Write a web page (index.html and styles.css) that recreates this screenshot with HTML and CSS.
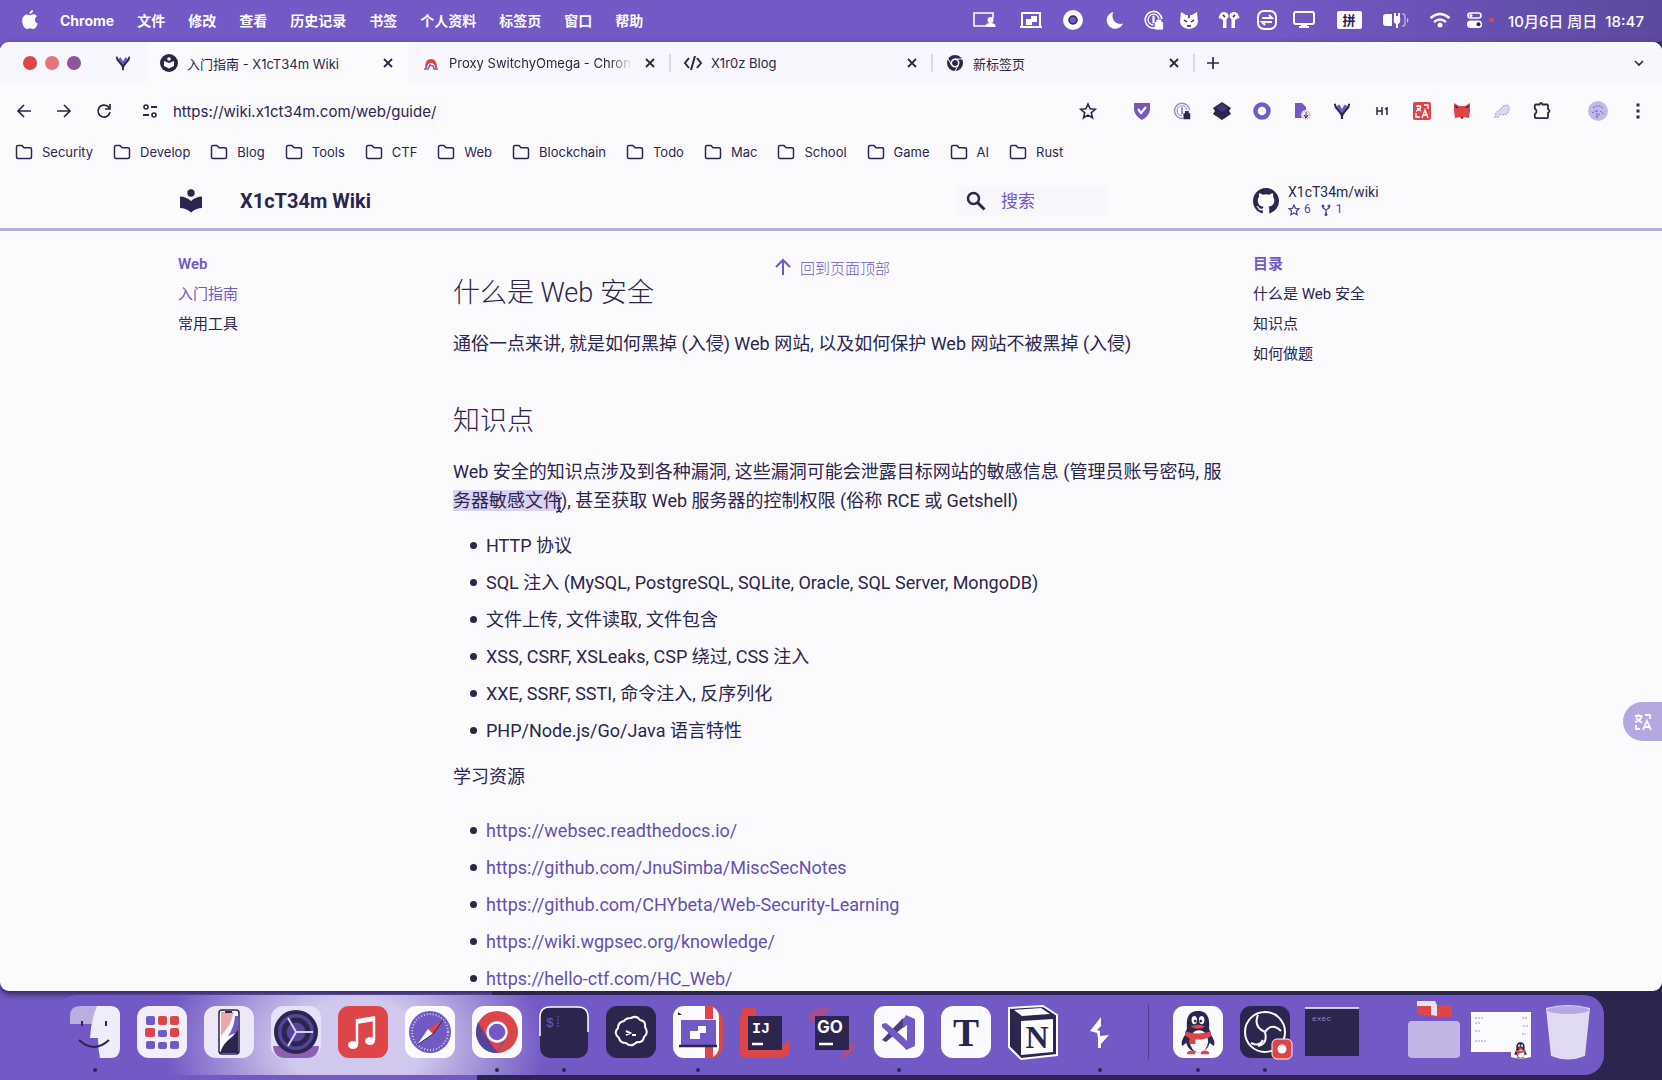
FILE: index.html
```html
<!DOCTYPE html>
<html lang="zh-CN">
<head>
<meta charset="utf-8">
<title>入门指南 - X1cT34m Wiki</title>
<link rel="stylesheet" href="styles.css">
</head>
<body>
<svg class="defs" aria-hidden="true">
  <symbol id="folder" viewBox="0 0 18 16"><path d="M3 1.500h4l2 2.300h6q1.500 0 1.500 1.500V13q0 1.500-1.500 1.500H3Q1.500 14.500 1.500 13V3q0-1.500 1.500-1.500z" fill="none" stroke="currentColor" stroke-width="1.500"/></symbol>
  <symbol id="close" viewBox="0 0 12 12"><path d="M2 2l8 8M10 2l-8 8" stroke="currentColor" stroke-width="1.800"/></symbol>
  <symbol id="vim" viewBox="0 0 20 20"><path d="M5 4l5 9 5-9" fill="none" stroke="#7359c5" stroke-width="5"/><path d="M2 2l1 4 7 8 7-8 1-4M10 12v7" fill="none" stroke="#2c254d" stroke-width="2.200"/></symbol>
  <symbol id="onep" viewBox="0 0 24 24"><path d="M14 21.500A10 10 0 1 1 22 11" fill="none" stroke="currentColor" stroke-width="2"/><path d="M12 18a6.500 6.500 0 1 1 6.500-7" fill="none" stroke="currentColor" stroke-width="1.600"/><path d="M12 7v9" stroke="currentColor" stroke-width="2.600"/></symbol>
  <symbol id="penguin" viewBox="0 0 40 50"><path d="M8 24q-8 11-5 15l5-4zM32 24q8 11 5 15l-5-4z" fill="#2c254d"/><path d="M20 1C10 1 7 8 8 20c-4 8-2 26 12 26s16-18 12-26C33 8 30 1 20 1z" fill="#2c254d"/><ellipse cx="21" cy="34" rx="10" ry="12" fill="#fbfbfe"/><ellipse cx="16" cy="11" rx="3" ry="4.500" fill="#fbfbfe"/><ellipse cx="24" cy="11" rx="3" ry="4.500" fill="#fbfbfe"/><circle cx="17" cy="12" r="1.500" fill="#2c254d"/><circle cx="23" cy="12" r="1.500" fill="#2c254d"/><path d="M12 18q8-4 16 0-8 5-16 0zM6 23q14 5 28 0v6q-10 4-17 3v5h-6v-6l-5-3zM8 46q5-4 9 0v2H8zM23 46q5-4 9 0v2h-9z" fill="#dd4548"/></symbol>
</svg>

<header class="menubar">
  <svg class="apple" viewBox="0 0 16 20"><path d="M11 0c.200 2-1.600 4-3.500 4C7.300 2 9.200.200 11 0zM8 5.200c1 0 2-.900 3.600-.900 1.500 0 2.700.800 3.400 1.900-3 1.800-2.500 6 .800 7.300C14.800 16.500 13 19 11.500 19c-1.300 0-1.800-.800-3.300-.800-1.600 0-2.100.800-3.300.800C2.700 19 .200 14.800.200 11c0-4.200 2.400-6.600 4.800-6.600C6.300 4.400 7.300 5.200 8 5.200z" fill="currentColor"/></svg>
  <nav class="menus">
    <b class="app-name">Chrome</b><span>文件</span><span>修改</span><span>查看</span><span>历史记录</span><span>书签</span><span>个人资料</span><span>标签页</span><span>窗口</span><span>帮助</span>
  </nav>
  <div class="status">
    <svg width="48" height="20" viewBox="0 0 24 20"><path d="M13 16H2V3h19v5" fill="none" stroke="currentColor" stroke-width="1.600"/><circle cx="18.500" cy="10" r="3" fill="currentColor"/><path d="M13 17q0-4 5.500-4t5 4z" fill="currentColor"/></svg>
    <svg width="46" height="20" viewBox="0 0 24 20"><path d="M3 16V3h18v13M1 17h22" fill="none" stroke="currentColor" stroke-width="2"/><path d="M7 9h5V6h6v6h-5v3H7z" fill="currentColor"/></svg>
    <svg width="38" height="20" viewBox="0 0 20 20"><circle cx="10" cy="10" r="10" fill="currentColor"/><circle cx="10" cy="10" r="4" fill="#7359c5" stroke="#2c254d" stroke-width="1.500"/></svg>
    <svg width="46" height="18" viewBox="0 0 20 20"><path d="M8 1A9.500 9.500 0 1 0 19 14C11 16 5 9 8 1z" fill="currentColor"/></svg>
    <svg width="31" height="20" viewBox="0 0 24 24"><use href="#onep"/><path d="M14 15h9v8h-9zM16 15v-3h5v3" fill="currentColor" stroke="currentColor"/></svg>
    <svg width="40" height="18" viewBox="0 0 20 18"><path d="M2 1l5 3h6l5-3 1 10q-1 6-9 7-8-1-9-7z" fill="currentColor"/><path d="M5 9l3 2M15 9l-3 2M8 15h4M10 4v3" stroke="#2c254d" stroke-width="1.500"/></svg>
    <svg width="40" height="18" viewBox="0 0 22 18"><ellipse cx="6" cy="5" rx="4.500" ry="4" fill="currentColor"/><ellipse cx="16" cy="5" rx="4.500" ry="4" fill="currentColor"/><path d="M5 6h3.500v11H5zM17 6h-3.500v11H17z" fill="currentColor"/><path d="M1 7l2-2M21 7l-2-2" stroke="currentColor" stroke-width="2"/><path d="M5 4l2 2M17 4l-2 2" stroke="#2c254d" stroke-width="1.500"/></svg>
    <svg width="36" height="20" viewBox="0 0 20 20"><rect x="1" y="1" width="18" height="18" rx="6" fill="none" stroke="currentColor" stroke-width="2"/><path d="M5 8h10l-3-3M15 12H5l3 3" fill="none" stroke="currentColor" stroke-width="2"/></svg>
    <svg width="38" height="18" viewBox="0 0 22 18"><rect x="1" y="1" width="20" height="12" rx="2" fill="none" stroke="currentColor" stroke-width="2"/><path d="M8 13h6v2h2v2H6v-2h2z" fill="currentColor"/></svg>
    <span class="ime-slot"><span class="ime">拼</span></span>
    <svg width="42" height="16" viewBox="0 0 28 16"><path d="M4 2h6v12H4q-3 0-3-3V5q0-3 3-3zM12 1h2v3h2V1h2v4q1 6-2 7v4h-2v-4q-3-1-2-7z" fill="currentColor"/><path d="M20 2h1q2 0 2 3v6q0 3-2 3h-1" fill="none" stroke="#b5a8e1" stroke-width="1.500"/><path d="M25 6q3 2 0 5z" fill="#d1c9ed"/></svg>
    <svg width="46" height="16" viewBox="0 0 22 16"><path d="M1.500 6Q11-2 20.500 6M5 10q6-5 12 0" fill="none" stroke="currentColor" stroke-width="2.400"/><circle cx="11" cy="13" r="2.500" fill="currentColor"/></svg>
    <svg width="24" height="16" viewBox="0 0 16 16"><rect x="1" y="1" width="13" height="5" rx="2.500" fill="none" stroke="currentColor" stroke-width="1.600"/><rect y="8.500" width="15" height="7.500" rx="3.500" fill="currentColor"/><circle cx="11.500" cy="12.200" r="2" fill="#2c254d"/><circle cx="4" cy="3.500" r="1.500" fill="currentColor"/></svg>
    <i class="rec-dot"></i>
    <time>10月6日 周日&nbsp; 18:47</time>
  </div>
</header>

<main class="window">
  <div class="tabstrip">
    <div class="lights"><i></i><i></i><i></i></div>
    <svg class="pinned" viewBox="0 0 20 20"><use href="#vim"/></svg>
    <div class="tab active">
      <svg class="favicon" viewBox="0 0 18 18"><circle cx="9" cy="9" r="9" fill="#2c254d"/><circle cx="9" cy="5" r="1.800" fill="#fbfbfe"/><path d="M4 7l5 2 5-2v5l-5 2.500L4 12z" fill="#fbfbfe"/></svg>
      <span class="tab-title">入门指南 - X1cT34m Wiki</span>
      <button class="tab-close" aria-label="关闭"><svg viewBox="0 0 12 12"><use href="#close"/></svg></button>
    </div>
    <div class="tab">
      <svg class="favicon" viewBox="0 0 18 18"><path d="M3 14Q3 5 9 5t6 9z" fill="#dd4548"/><path d="M5 15q0-6 4-6t4 6z" fill="#fbfbfe"/><path d="M2 15h4l2-4 3 1 1 3h4" fill="none" stroke="#7359c5" stroke-width="1.500"/></svg>
      <span class="tab-title fade">Proxy SwitchyOmega - Chron</span>
      <button class="tab-close" aria-label="关闭"><svg viewBox="0 0 12 12"><use href="#close"/></svg></button>
    </div>
    <div class="tab">
      <svg class="favicon" viewBox="0 0 18 18"><path d="M5 4L1 9l4 5M13 4l4 5-4 5M11 2L7 16" fill="none" stroke="#2c254d" stroke-width="2"/></svg>
      <span class="tab-title">X1r0z Blog</span>
      <button class="tab-close" aria-label="关闭"><svg viewBox="0 0 12 12"><use href="#close"/></svg></button>
    </div>
    <div class="tab">
      <svg class="favicon" viewBox="0 0 18 18"><circle cx="9" cy="9" r="8" fill="#2c254d"/><circle cx="9" cy="9" r="3.700" fill="#2c254d" stroke="#fbfbfe" stroke-width="1.500"/><path d="M9 5h8M5.500 11L2 4.500M12.500 11L9 17" stroke="#fbfbfe"/></svg>
      <span class="tab-title">新标签页</span>
      <button class="tab-close" aria-label="关闭"><svg viewBox="0 0 12 12"><use href="#close"/></svg></button>
    </div>
    <button class="new-tab" aria-label="新标签页"><svg viewBox="0 0 12 12"><path d="M6 0v12M0 6h12" stroke="currentColor" stroke-width="1.700"/></svg></button>
    <button class="tab-list" aria-label="搜索标签页"><svg viewBox="0 0 12 12"><path d="M2 4l4 4 4-4" fill="none" stroke="currentColor" stroke-width="1.700"/></svg></button>
  </div>

  <div class="toolbar">
    <button aria-label="后退"><svg viewBox="0 0 18 18"><path d="M16 9H3M9 3L3 9l6 6" fill="none" stroke="currentColor" stroke-width="1.700"/></svg></button>
    <button aria-label="前进"><svg viewBox="0 0 18 18"><path d="M2 9h13M9 3l6 6-6 6" fill="none" stroke="currentColor" stroke-width="1.700"/></svg></button>
    <button aria-label="重新加载"><svg viewBox="0 0 18 18"><path d="M15 10a6 6 0 1 1-2-5.500L15 7M15 2v5h-5" fill="none" stroke="currentColor" stroke-width="1.700"/></svg></button>
    <button class="site-info" aria-label="网站信息"><svg viewBox="0 0 18 18"><circle cx="5" cy="5" r="2" fill="none" stroke="currentColor" stroke-width="1.600"/><circle cx="13" cy="13" r="2" fill="none" stroke="currentColor" stroke-width="1.600"/><path d="M10 5h6M2 13h6" stroke="currentColor" stroke-width="1.800"/></svg></button>
    <input class="url" type="text" aria-label="地址" value="https://wiki.x1ct34m.com/web/guide/">
    <button class="star" aria-label="收藏"><svg viewBox="0 0 18 18"><path d="M9 2l2.100 4.800 5.200.500-4 3.400 1.200 5.100L9 13.100l-4.500 2.700 1.200-5.100-4-3.400 5.200-.500z" fill="none" stroke="currentColor" stroke-width="1.600"/></svg></button>
    <div class="extensions">
      <svg viewBox="0 0 18 18"><path d="M1 1h16v7q-1 6-8 10Q2 14 1 8z" fill="#7359c5"/><path d="M2 2h14M3 11q2 3 5 5M15 11l-4 4" stroke="#dd4548" stroke-dasharray="1.500 1.500" fill="none"/><path d="M5 7l3 4 5-6" fill="none" stroke="#fbfbfe" stroke-width="2.200"/></svg>
      <svg viewBox="0 0 24 24" class="violet"><use href="#onep"/><path d="M14 15h9v8h-9zM16 15v-3h5v3" fill="#2c254d"/></svg>
      <svg viewBox="0 0 18 18"><path d="M9 0l9 6-2 3 2 3-9 6-9-6 2-3-2-3z" fill="#2c254d"/><path d="M9 2l6 4-6 4-6-4z" fill="#463779"/></svg>
      <svg viewBox="0 0 18 18"><circle cx="9" cy="9" r="6.500" fill="none" stroke="#7359c5" stroke-width="4.500"/></svg>
      <svg viewBox="0 0 18 18"><path d="M2 1h7l4 4v11H2z" fill="#7359c5"/><circle cx="13" cy="13" r="5" fill="#fbfbfe"/><circle cx="13" cy="13" r="4" fill="none" stroke="#dd4548" stroke-dasharray="1 1"/><path d="M13 10v5M11 13l2 3 2-3" fill="none" stroke="#2c254d"/></svg>
      <svg viewBox="0 0 20 20"><use href="#vim"/></svg>
      <svg viewBox="0 0 18 18"><path d="M4 5v8M9 5v8M4 9h5M12 7l2-1v7" fill="none" stroke="#2c254d" stroke-width="1.500"/></svg>
      <svg viewBox="0 0 18 18"><rect width="18" height="18" rx="2" fill="#dd4548"/><path d="M3 4h5M5.500 3v2M8 4q-1 4-5 5M4 6l4 3M11 3h4v4M3 11v4h4M9 16l3-8 3 8M10 13h5" fill="none" stroke="#fbfbfe" stroke-width="1.400"/></svg>
      <svg viewBox="0 0 18 18"><path d="M1 1l5 3h6l5-3v8l-1 7-5-1-2 2-2-2-5 1-1-7z" fill="#dd4548"/><path d="M2 4l3 2M16 4l-3 2" stroke="#2c254d" stroke-width="1.500"/><path d="M7.500 15h3l-1.500 2z" fill="#2c254d"/></svg>
      <svg viewBox="0 0 18 18"><path d="M2 16q0-7 5-8 2-5 8-5 3 4-1 9l-4 1-3-1-2 4" fill="#dcd6f1" stroke="#a092d8" stroke-dasharray="2 1"/></svg>
      <svg viewBox="0 0 18 18"><path d="M3 2.500h3.500q1.500-3 3 0H14q1 0 1 1V7q3 1.500 0 4v4q0 1.200-1 1.200H3q-1.200 0-1.200-1.200v-3q3.500-2.500 0-5.500V3.500q0-1 1.200-1z" fill="none" stroke="#2c254d" stroke-width="1.800"/></svg>
    </div>
    <svg class="avatar" viewBox="0 0 20 20"><circle cx="10" cy="10" r="10" fill="#c3b9e7"/><path d="M5 7q5-4 10 0M4 12l4-2M12 10l4 3M9 9v8M12 13l-5 3" stroke="#7359c5" fill="none" stroke-dasharray="2 1"/></svg>
    <button class="more" aria-label="更多"><svg viewBox="0 0 18 18"><path d="M7.500 1.500h3v3h-3zM7.500 7.500h3v3h-3zM7.500 13.500h3v3h-3z" fill="currentColor"/></svg></button>
  </div>

  <nav class="bookmarks">
    <a href="#"><svg><use href="#folder"/></svg>Security</a>
    <a href="#"><svg><use href="#folder"/></svg>Develop</a>
    <a href="#"><svg><use href="#folder"/></svg>Blog</a>
    <a href="#"><svg><use href="#folder"/></svg>Tools</a>
    <a href="#"><svg><use href="#folder"/></svg>CTF</a>
    <a href="#"><svg><use href="#folder"/></svg>Web</a>
    <a href="#"><svg><use href="#folder"/></svg>Blockchain</a>
    <a href="#"><svg><use href="#folder"/></svg>Todo</a>
    <a href="#"><svg><use href="#folder"/></svg>Mac</a>
    <a href="#"><svg><use href="#folder"/></svg>School</a>
    <a href="#"><svg><use href="#folder"/></svg>Game</a>
    <a href="#"><svg><use href="#folder"/></svg>AI</a>
    <a href="#"><svg><use href="#folder"/></svg>Rust</a>
  </nav>

  <div class="site-header">
    <div class="wrap header-row">
      <svg class="logo" viewBox="0 0 24 24"><circle cx="12" cy="4" r="3.700" fill="currentColor"/><path d="M1 7.500q6 0 11 4.500 5-4.500 11-4.500V19q-6 0-11 4.500Q7 19 1 19z" fill="currentColor"/></svg>
      <a class="site-title" href="#">X1cT34m Wiki</a>
      <label class="search">
        <svg viewBox="0 0 20 20"><circle cx="7.500" cy="7.500" r="5.500" fill="none" stroke="currentColor" stroke-width="2.500"/><path d="M11.500 11.500l7 7" stroke="currentColor" stroke-width="3"/></svg>
        <input type="text" placeholder="搜索" aria-label="搜索">
      </label>
      <a class="repo" href="#">
        <svg class="github" viewBox="0 0 16 16"><path fill="currentColor" d="M8 0C3.580 0 0 3.580 0 8c0 3.540 2.290 6.530 5.470 7.590.400.070.550-.170.550-.380 0-.190-.010-.820-.010-1.490-2.010.370-2.530-.490-2.690-.940-.090-.230-.480-.940-.820-1.130-.280-.150-.680-.520-.010-.530.630-.010 1.080.580 1.230.820.720 1.210 1.870.870 2.330.660.070-.520.280-.870.510-1.070-1.780-.200-3.640-.890-3.640-3.950 0-.870.310-1.590.820-2.150-.080-.200-.360-1.020.080-2.120 0 0 .670-.210 2.200.820a7.600 7.600 0 0 1 4 0c1.530-1.040 2.200-.820 2.200-.820.440 1.100.160 1.920.080 2.120.510.560.820 1.270.820 2.150 0 3.070-1.870 3.750-3.650 3.950.290.250.540.730.540 1.480 0 1.070-.010 1.930-.010 2.200 0 .210.150.460.550.380A8 8 0 0 0 16 8c0-4.420-3.580-8-8-8z"/></svg>
        <span class="repo-text">
          <span>X1cT34m/wiki</span>
          <span class="facts"><svg viewBox="0 0 12 12"><path d="M6 1l1.500 3.300 3.500.400-2.600 2.400.700 3.600L6 9 2.900 10.700l.700-3.600L1 4.700l3.500-.400z" fill="none" stroke="currentColor" stroke-width="1.300"/></svg>6 <svg class="fork" viewBox="0 0 12 12"><path d="M3 2v2l3 2 3-2V2M6 6v4" fill="none" stroke="currentColor" stroke-width="1.400"/><circle cx="3" cy="2" r="1.500" fill="currentColor"/><circle cx="9" cy="2" r="1.500" fill="currentColor"/><circle cx="6" cy="10.500" r="1.500" fill="currentColor"/></svg>1</span>
        </span>
      </a>
    </div>
  </div>

  <div class="page">
    <div class="wrap columns">
      <nav class="side">
        <b>Web</b>
        <a class="current" href="#">入门指南</a>
        <a href="#">常用工具</a>
      </nav>
      <article>
        <h2>什么是 Web 安全</h2>
        <p>通俗一点来讲, 就是如何黑掉 (入侵) Web 网站, 以及如何保护 Web 网站不被黑掉 (入侵)</p>
        <h2>知识点</h2>
        <p>Web 安全的知识点涉及到各种漏洞, 这些漏洞可能会泄露目标网站的敏感信息 (管理员账号密码, 服<mark>务器敏感文件<svg class="ibeam" viewBox="0 0 8 16"><path d="M1 1q3 0 3 2 0-2 3-2M4 3v10M1 15q3 0 3-2 0 2 3 2M2 11h4" fill="none" stroke="#2c254d" stroke-width="1.500"/></svg></mark>), 甚至获取 Web 服务器的控制权限 (俗称 RCE 或 Getshell)</p>
        <ul>
          <li>HTTP 协议</li>
          <li>SQL 注入 (MySQL, PostgreSQL, SQLite, Oracle, SQL Server, MongoDB)</li>
          <li>文件上传, 文件读取, 文件包含</li>
          <li>XSS, CSRF, XSLeaks, CSP 绕过, CSS 注入</li>
          <li>XXE, SSRF, SSTI, 命令注入, 反序列化</li>
          <li>PHP/Node.js/Go/Java 语言特性</li>
        </ul>
        <p>学习资源</p>
        <ul class="links">
          <li><a href="#">https://websec.readthedocs.io/</a></li>
          <li><a href="#">https://github.com/JnuSimba/MiscSecNotes</a></li>
          <li><a href="#">https://github.com/CHYbeta/Web-Security-Learning</a></li>
          <li><a href="#">https://wiki.wgpsec.org/knowledge/</a></li>
          <li><a href="#">https://hello-ctf.com/HC_Web/</a></li>
        </ul>
      </article>
      <nav class="side toc">
        <b>目录</b>
        <a href="#">什么是 Web 安全</a>
        <a href="#">知识点</a>
        <a href="#">如何做题</a>
      </nav>
    </div>
    <button class="to-top"><svg viewBox="0 0 18 18"><path d="M9 17V2M2 9l7-7 7 7" fill="none" stroke="currentColor" stroke-width="2"/></svg>回到页面顶部</button>
    <button class="translate" aria-label="翻译"><svg viewBox="0 0 20 20"><path d="M2 4h7M5.500 2v2M9 4Q7 9 2 10M3 6l6 5M12 3h5v4M3 13v4h4M10 18l4-9 4 9M11 15h6" fill="none" stroke="#fbfbfe" stroke-width="1.800"/></svg></button>
  </div>
</main>

<footer class="dock">
  <div class="app running"><svg viewBox="0 0 50 52"><rect width="50" height="52" rx="10" fill="#7359c5"/><path d="M0 18V10Q0 0 10 0h30q10 0 10 10v8z" fill="#b9ade2"/><path d="M0 18h24v34H10Q0 52 0 42z" fill="#7359c5"/><path d="M27 0h13q10 0 10 10v32q0 10-10 10H30q-2-9-2-20h-8q1-18 7-32z" fill="#f0edfa"/><path d="M12 15v5M36 15v5" stroke="#2c254d" stroke-width="2"/><path d="M9 34q15 14 30 0" fill="none" stroke="#2c254d" stroke-width="2"/></svg></div>
  <div class="app"><svg viewBox="0 0 50 52"><rect width="50" height="52" rx="12" fill="#f2effb"/><g fill="#dd4548"><rect x="21" y="10" width="9" height="9" rx="2"/><rect x="33" y="10" width="9" height="9" rx="2"/><rect x="8" y="22" width="10" height="9" rx="2"/><rect x="33" y="22" width="9" height="9" rx="2"/></g><g fill="#7359c5"><rect x="9" y="10" width="9" height="9" rx="2"/><rect x="21" y="24" width="9" height="7" rx="2"/><rect x="9" y="35" width="9" height="8" rx="2"/><rect x="21" y="36" width="9" height="7" rx="2"/><rect x="33" y="35" width="9" height="8" rx="2"/></g></svg></div>
  <div class="app"><svg viewBox="0 0 50 52"><rect width="50" height="52" rx="12" fill="#ece8f8"/><rect x="15" y="4" width="20" height="44" rx="3" fill="#fbfbfe" stroke="#2c254d" stroke-width="1.500"/><path d="M17 6h13l-4 12-9 12z" fill="#eea6aa"/><path d="M34 10v16l-10 4q6-8 7-20z" fill="#7359c5"/><path d="M34 24v23H16q3-10 12-16z" fill="#2c254d"/><path d="M21 5h7v2h-7z" fill="#2c254d"/></svg></div>
  <div class="app"><svg viewBox="0 0 50 52"><rect width="50" height="52" rx="12" fill="#e6e1f6"/><path d="M2 40h46q-1 12-12 12H14Q3 52 2 40z" fill="#8b61b4"/><circle cx="25" cy="26" r="20" fill="#56439a" stroke="#2c254d" stroke-width="4"/><circle cx="25" cy="26" r="12" fill="none" stroke="#2c254d" stroke-width="5"/><path d="M25 26h17M25 26l-8-14M25 26l-8 14" stroke="#d5ceee" stroke-width="2"/></svg></div>
  <div class="app"><svg viewBox="0 0 50 52"><rect width="50" height="52" rx="11" fill="#dd4548"/><path d="M19 13l18-3v5l-18 3z" fill="#fbfbfe"/><path d="M19 13v25M36 11v23" stroke="#fbfbfe" stroke-width="2.500"/><ellipse cx="15" cy="39" rx="5" ry="4" fill="#fbfbfe"/><ellipse cx="32" cy="35" rx="5" ry="4" fill="#fbfbfe"/></svg></div>
  <div class="app"><svg viewBox="0 0 50 52"><rect width="50" height="52" rx="11" fill="#fbfbfe"/><circle cx="25" cy="26" r="21" fill="#7359c5"/><circle cx="25" cy="26" r="18" fill="none" stroke="#d5ceee" stroke-width="2" stroke-dasharray="1 2"/><path d="M38 14L23 23l5 5z" fill="#dd4548"/><path d="M12 39l11-16 5 5z" fill="#fbfbfe"/><path d="M38 14L28 28 12 39" fill="none" stroke="#2c254d"/></svg></div>
  <div class="app running"><svg viewBox="0 0 50 52"><rect width="50" height="52" rx="12" fill="#fbfbfe"/><circle cx="25" cy="26" r="21" fill="#dd4548"/><path d="M6 16l11 19 9 12Q8 47 4 29q0-8 2-13z" fill="#55429a"/><path d="M25 47l10-18" stroke="#8d4e95" stroke-width="2"/><circle cx="25" cy="26" r="9.500" fill="#7359c5" stroke="#fbfbfe" stroke-width="2.500"/></svg></div>
  <div class="app running"><svg viewBox="0 0 50 52"><rect x="1" y="1" width="48" height="51" rx="10" fill="#2c254d"/><path d="M1 30V11Q1 1 11 1h28q10 0 10 10v15" fill="none" stroke="#fbfbfe" stroke-width="1.500"/><text x="7" y="21" font-family="Liberation Mono, monospace" font-size="13" fill="#7359c5">$</text><path d="M19 10v12" stroke="#7359c5" stroke-dasharray="2 1"/></svg></div>
  <div class="app"><svg viewBox="0 0 50 52"><rect width="50" height="52" rx="11" fill="#2c254d"/><path d="M25 12q6-3 9 2 6 1 5 7 4 6-1 10-1 6-7 5-6 6-11 1-6 0-7-5-6-5-1-10 0-6 6-7 2-3 7-3z" fill="none" stroke="#fbfbfe" stroke-width="2"/><path d="M20 25l4 2-4 2M26 29h4" fill="none" stroke="#fbfbfe" stroke-width="2"/></svg></div>
  <div class="app running"><svg viewBox="0 0 50 52"><path d="M43 4q7 3 7 11v22q0 13-10 15z" fill="#dd4548"/><rect width="46" height="52" rx="11" fill="#fbfbfe"/><path d="M32 0h8v52h-8z" fill="#dd4548"/><path d="M31 13h13v26H31z" fill="#fbfbfe"/><rect x="8" y="14" width="35" height="25" fill="#7359c5"/><path d="M17 25h8v-5h8v7h-6v6H17z" fill="#fbfbfe"/><path d="M6 40h38" stroke="#2c254d" stroke-width="2.500"/><path d="M5 6l4 3H5z" fill="#2c254d"/></svg></div>
  <div class="app"><svg viewBox="0 0 50 52"><path d="M3 2h13v9H8v33h28l14-10v8q0 10-12 10H6Q0 52 0 46V12z" fill="#dd4548"/><rect x="8" y="10" width="34" height="34" fill="#2c254d"/><text x="12" y="27" font-family="Liberation Mono, monospace" font-weight="700" font-size="15" fill="#fbfbfe">IJ</text><path d="M12 38h11" stroke="#fbfbfe" stroke-width="2.500"/></svg></div>
  <div class="app"><svg viewBox="0 0 50 52"><path d="M1 14Q4 0 23 2L8 16zM48 36q0 14-16 16l10-13z" fill="#a7508a"/><rect x="8" y="10" width="34" height="34" fill="#2c254d"/><text x="10" y="27" font-family="Inter, sans-serif" font-weight="700" font-size="17" fill="#fbfbfe">GO</text><path d="M12 38h14" stroke="#fbfbfe" stroke-width="2.500"/></svg></div>
  <div class="app running"><svg viewBox="0 0 50 52"><rect width="50" height="52" rx="11" fill="#fbfbfe"/><path d="M8 34L29 12l4 6-21 18z" fill="#4b3b84"/><path d="M8 18l4-1 21 17v10L8 21z" fill="#7359c5"/><path d="M32 9l9 4v27l-9 4-3-5V14z" fill="#7359c5"/><path d="M33 19v16l-9-9z" fill="#fbfbfe"/></svg></div>
  <div class="app"><svg viewBox="0 0 50 52"><rect width="50" height="52" rx="12" fill="#fbfbfe"/><text x="25" y="40" text-anchor="middle" font-family="Liberation Serif, serif" font-weight="700" font-size="39" fill="#2c254d">T</text></svg></div>
  <div class="app"><svg viewBox="0 0 50 52"><path d="M1 2l34-2 14 9v40l-36 4L1 41z" fill="#2c254d" stroke="#fbfbfe" stroke-width="2"/><path d="M6 4l27-2 9 6-28 2zM13 15l32-2v33l-32 3z" fill="#fbfbfe"/><text x="29" y="42" text-anchor="middle" font-family="Liberation Serif, serif" font-weight="700" font-size="32" fill="#2c254d">N</text></svg></div>
  <div class="app running"><svg viewBox="0 0 50 52"><path d="M26 11v9l-4 4 3 1v5l9-1-8 9v4h-3V32l-1-5-7-2z" fill="#fbfbfe"/></svg></div>
  <hr>
  <div class="app running"><svg viewBox="0 0 50 52"><rect width="50" height="52" rx="11" fill="#fbfbfe"/><svg x="6" y="4" width="38" height="46" viewBox="0 0 40 50"><use href="#penguin"/></svg></svg></div>
  <div class="app running"><svg viewBox="0 0 50 52"><rect width="50" height="52" rx="11" fill="#2c254d"/><circle cx="25" cy="26" r="20" fill="none" stroke="#fbfbfe" stroke-width="2"/><path d="M18 9q-5 12 7 17M25 26q7-10 16-1M25 26q3 12-7 14M11 37q8 4 12-3" fill="none" stroke="#fbfbfe" stroke-width="2"/><rect x="32" y="33" width="20" height="20" rx="5" fill="#dd4548" stroke="#fbfbfe"/><circle cx="42" cy="43" r="4.500" fill="#fbfbfe"/></svg></div>
  <div class="app"><svg viewBox="0 0 50 52"><path d="M-2 2h54v48H-2z" fill="#2c254d"/><path d="M-2 2h54" stroke="#fbfbfe" stroke-width="1.500"/><text x="5" y="15" font-family="Liberation Mono, monospace" font-size="8" fill="#9282d2">exec</text></svg></div>
  <div class="spacer"></div>
  <div class="app"><svg viewBox="0 0 50 52"><path d="M8-1h35v12H26L8 8z" fill="#dd4548"/><path d="M8-5h18l2 4v11l-6-1V0H8z" fill="#e8e3f7"/><rect x="-1" y="15" width="52" height="37" rx="4" fill="#c0b5e5"/></svg></div>
  <div class="app"><svg viewBox="0 0 50 52"><path d="M-5 6h60v40H-5z" fill="#fbfbfe"/><path d="M-1 12h8M-1 17h6M-1 25h5M-1 35h12M46 12h6M47 20h5M46 28h4" stroke="#a092d8" stroke-dasharray="2 1"/><path d="M35 37h20v14q-10 3-20 0z" fill="#fbfbfe"/><svg x="36" y="36" width="17" height="17" viewBox="0 0 40 50"><use href="#penguin"/></svg></svg></div>
  <div class="app"><svg viewBox="0 0 50 52"><path d="M3 2q22-6 44 0l-5 48q-17 7-34 0z" fill="#e0daf3"/><ellipse cx="25" cy="4" rx="21" ry="4" fill="#b6a9e0"/></svg></div>
</footer>
</body>
</html>
```
FILE: styles.css
```css
:root {
  --paper: #fbfbfe;
  --violet: #7359c5;
  --ink: #2c254d;
  --red: #dd4548;
  --ui: Inter, "Noto Sans CJK SC", sans-serif;
  --doc: Roboto, "Noto Sans CJK SC", sans-serif;
}

* { box-sizing: border-box; }

body {
  margin: 0;
  height: 100vh;
  display: flex;
  flex-direction: column;
  overflow: hidden;
  color: var(--ink);
  font-family: var(--ui);
  background: linear-gradient(100deg, var(--violet) 36%, var(--ink) 36%);
}

button, input { font: inherit; color: inherit; border: 0; padding: 0; background: none; }
button { display: flex; align-items: center; justify-content: center; }
a { color: inherit; text-decoration: none; }
svg { display: block; flex: none; overflow: visible; }
.defs { position: absolute; width: 0; height: 0; }

/* menu bar */
.menubar {
  flex: none;
  height: 42px;
  display: flex;
  align-items: center;
  padding: 0 18px 2px 22px;
  color: var(--paper);
  font-size: 14px;
  background: linear-gradient(90deg, var(--violet) 76%, #5d499f);
}
.apple { width: 16px; height: 20px; }
.menus { display: flex; align-items: baseline; gap: 23px; margin-left: 22px; white-space: nowrap; font-weight: 600; }
.app-name { font-weight: 700; }
.status { display: flex; align-items: center; margin-left: auto; }
.ime-slot { width: 52px; display: flex; justify-content: center; }
.ime { width: 25px; height: 18px; border-radius: 2px; background: var(--paper); color: var(--ink); font-size: 13px; line-height: 18px; font-weight: 700; text-align: center; }
.rec-dot { width: 5px; height: 4px; margin-left: 2px; background: var(--red); }
.status time { width: 136px; margin-left: 14px; font-size: 15px; font-weight: 500; white-space: nowrap; text-align: right; }

/* browser window */
.window {
  flex: 1;
  min-height: 0;
  display: flex;
  flex-direction: column;
  overflow: hidden;
  border-radius: 9px;
  background: var(--paper);
  box-shadow: 0 3px 6px var(--ink);
}
.tabstrip { flex: none; height: 42px; display: flex; align-items: center; padding: 0 13px 0 23px; font-size: 13px; background: #f8f7fd; }
.lights { display: flex; gap: 8px; }
.lights i { width: 14px; height: 14px; border-radius: 50%; background: var(--red); }
.lights i:nth-child(2) { background: #e57478; }
.lights i:nth-child(3) { background: #8c559c; }
.pinned { width: 16px; height: 16px; margin: 0 16px 0 34px; }
.tab { width: 262px; height: 100%; display: flex; align-items: center; padding-left: 13px; }
.tab::after { content: ""; width: 2px; height: 18px; margin-left: 13px; background: #dcd6f1; }
.tab.active { background: var(--paper); }
.tab.active::after { background: none; }
.favicon { width: 18px; height: 18px; }
.tab-title { flex: 1; margin: 0 8px 0 9px; overflow: hidden; white-space: nowrap; }
.fade { mask-image: linear-gradient(90deg, #000 86%, transparent 98%); }
.tab-close svg { width: 12px; height: 12px; }
.new-tab { margin-left: 12px; }
.new-tab svg, .tab-list svg { width: 12px; height: 12px; }
.tab-list { margin-left: auto; padding: 0 4px; }

.toolbar { flex: none; height: 54px; display: flex; align-items: center; padding: 0 15px; }
.toolbar button svg { width: 18px; height: 18px; }
.toolbar > button { width: 18px; margin-right: 22px; }
.toolbar .site-info { margin: 0 14px 0 6px; }
.url { flex: 1; min-width: 0; font-size: 15px; }
.toolbar .star { margin-right: 36px; }
.extensions { display: flex; gap: 22px; }
.extensions svg { width: 18px; height: 18px; }
.violet { color: #9d8dd7; }
.avatar { width: 20px; height: 20px; margin: 0 21px 0 37px; }
.toolbar .more { margin: 0; }

.bookmarks { flex: none; height: 28px; display: flex; align-items: center; gap: 20px; padding: 0 15px; font-size: 13px; }
.bookmarks a { display: flex; align-items: center; gap: 9px; }
.bookmarks svg { width: 18px; height: 16px; }

/* wiki */
.wrap { max-width: 1306px; margin: 0 auto; }
.site-header { flex: none; border-bottom: 3px solid #b8abe2; font-family: var(--doc); }
.header-row { height: 62px; display: flex; align-items: center; padding-top: 8px; }
.logo { width: 24px; height: 24px; margin: 0 37px 0 1px; }
.site-title { font-size: 20px; font-weight: 700; }
.search { width: 153px; height: 30px; margin-left: auto; display: flex; align-items: center; gap: 15px; padding: 0 11px; background: #f8f7fd; }
.search svg { width: 20px; height: 20px; }
.search input { width: 90px; font-size: 17px; }
.search input::placeholder { color: var(--violet); opacity: 1; }
.repo { width: 231px; margin-left: 145px; display: flex; align-items: center; gap: 9px; font-size: 14px; line-height: 17px; }
.github { width: 26px; height: 26px; }
.repo-text { display: flex; flex-direction: column; }
.facts { display: flex; gap: 4px; font-size: 12px; color: #54439a; }
.facts svg { width: 12px; height: 12px; align-self: center; }
.fork { margin-left: 5px; }

.page { position: relative; flex: 1; min-height: 0; overflow: hidden; font-family: var(--doc); }
.columns { display: grid; grid-template-columns: 275px 1fr 231px; }
.side { display: flex; flex-direction: column; gap: 9px; padding-top: 23px; font-size: 15px; line-height: 21px; }
.side b, .current { color: var(--violet); }
.side b { font-weight: 600; }

article { padding: 43px 24px 0 0; font-size: 18px; line-height: 29px; }
h2 { margin: 0 0 17px; font-size: 27px; line-height: 38px; font-weight: 300; }
article p { margin: 0 0 16px; }
article p + h2 { margin-top: 44px; }
mark { position: relative; color: inherit; background: #d9d2f0; }
.ibeam { position: absolute; right: -2px; bottom: -2px; width: 8px; height: 16px; }
article ul { margin: 0 0 17px; padding-left: 33px; display: flex; flex-direction: column; gap: 8px; list-style: none; }
article li { display: flex; align-items: center; }
article li::before { content: ""; width: 7px; height: 7px; margin: 0 9px 0 -16px; border-radius: 50%; background: var(--ink); }
.links { padding-top: 9px; color: #6450af; }

.to-top { position: absolute; top: 20px; left: 50%; margin-left: -57px; height: 32px; gap: 8px; font-size: 15px; color: var(--violet); font-weight: 300; }
.to-top svg { width: 18px; height: 18px; }
.translate { position: absolute; right: 0; top: 471px; width: 39px; height: 39px; border-radius: 20px 0 0 20px; background: #b5a8e1; }
.translate svg { width: 20px; height: 20px; }

/* dock */
.dock {
  flex: none;
  height: 80px;
  margin: 4px 58px 5px 57px;
  display: flex;
  align-items: center;
  padding: 0 2px 6px 4px;
  border-radius: 20px;
  background: radial-gradient(ellipse 190px 130px at 298px 50px, #d1c9ed 35%, transparent), var(--violet);
}
.app { position: relative; flex: none; width: 67px; display: flex; justify-content: center; }
.app > svg { width: 50px; height: 52px; }
.running::after { content: ""; position: absolute; bottom: -14px; width: 4px; height: 4px; border-radius: 50%; background: var(--ink); }
.dock hr { width: 1px; height: 56px; margin: 0 15px; border: 0; background: #4f3f8b; }
.spacer { flex: 0 1 35px; }
```
